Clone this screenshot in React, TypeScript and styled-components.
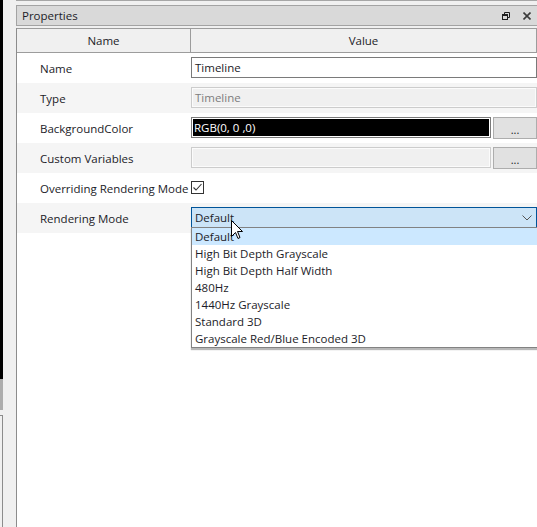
import React from "react";
import styled, { createGlobalStyle } from "styled-components";

const GlobalStyle = createGlobalStyle`
  html, body { margin: 0; padding: 0; background: #f0f0f0; }
  body { font-family: "Open Sans", "Noto Sans", sans-serif; font-size: 11.5px; color: #1c1c28; }
  * { box-sizing: border-box; }
`;

const Screen = styled.div`
  position: relative;
  display: flex;
  width: 537px;
  height: 527px;
  overflow: hidden;
  background: #f0f0f0;
`;

const LeftDock = styled.div`
  width: 16px;
  flex: none;
  display: flex;
  flex-direction: column;
`;

const DockStrip = styled.div<{ $h: number; $bg: string }>`
  width: 3px;
  height: ${(p) => p.$h}px;
  background: ${(p) => p.$bg};
  flex: none;
`;

const DockPanel = styled.div`
  width: 3px;
  flex: 1;
  margin-top: 5px;
  border-top: 1px solid #8c8c8c;
  border-right: 1px solid #8c8c8c;
  background: #f0f0f0;
`;

const Panel = styled.div`
  flex: 1;
  display: flex;
  flex-direction: column;
  min-width: 0;
`;

const TopEdge = styled.div`
  height: 1px;
  background: #a6a6a6;
  margin-bottom: 4px;
  flex: none;
`;

const TitleBar = styled.div`
  height: 21px;
  flex: none;
  display: flex;
  align-items: center;
  justify-content: space-between;
  padding: 0 6px 0 5px;
  background: #d9d9d9;
  border: 1px solid #a3a3a3;
  border-right: none;
`;

const TitleText = styled.span`
  font-size: 11.5px;
  color: #1c1c28;
`;

const TitleIcons = styled.div`
  display: flex;
  align-items: center;
  gap: 13px;
  padding-top: 1px;
`;

const Grid = styled.div`
  position: relative;
  flex: 1;
  margin-top: 2px;
  background: #ffffff;
  border-left: 1px solid #8c8c8c;
`;

const HeaderRow = styled.div`
  display: grid;
  grid-template-columns: 174px 1fr;
  height: 25px;
  background: #f0f0f0;
  border-top: 1px solid #9c9c9c;
  border-bottom: 1px solid #9c9c9c;
  border-right: 1px solid #9c9c9c;
`;

const HeaderCell = styled.div<{ $divider?: boolean }>`
  display: flex;
  align-items: center;
  justify-content: center;
  border-right: ${(p) => (p.$divider ? "1px solid #9c9c9c" : "none")};
  color: #1c1c28;
`;

const PropRow = styled.div<{ $alt?: boolean }>`
  display: grid;
  grid-template-columns: 174px 1fr;
  height: 30px;
  background: ${(p) => (p.$alt ? "#f5f5f5" : "#ffffff")};
`;

const Label = styled.div`
  display: flex;
  align-items: center;
  padding-left: 23px;
  padding-top: 1px;
  white-space: nowrap;
  color: #1c1c28;
`;

const ValueCell = styled.div`
  display: flex;
  align-items: flex-start;
  gap: 2px;
  padding-top: 4px;
  min-width: 0;
`;

const TextBox = styled.div<{ $variant: "normal" | "disabled" | "black" }>`
  flex: 1;
  height: 21px;
  display: flex;
  align-items: center;
  padding-left: 3px;
  white-space: nowrap;
  overflow: hidden;
  ${(p) =>
    p.$variant === "normal"
      ? `background:#fff;border:1px solid #7a7a7a;color:#1c1c28;`
      : p.$variant === "disabled"
      ? `background:#f0f0f0;border:1px solid #cccccc;box-shadow: inset 0 0 0 1px #fbfbfb;color:#7d7d7d;`
      : `background:#000;border:1px solid #7a7a7a;box-shadow: inset 0 0 0 1px #ffffff;color:#ffffff;padding-left:2px;`}
`;

const EllipsisButton = styled.div`
  width: 44px;
  height: 22px;
  flex: none;
  display: flex;
  align-items: flex-end;
  justify-content: center;
  padding-bottom: 4px;
  background: #e1e1e1;
  border: 1px solid #adadad;
  font-size: 11px;
  line-height: 8px;
  color: #1c1c28;
`;

const CheckBox = styled.div`
  width: 13px;
  height: 13px;
  margin-top: 4px;
  background: #fff;
  border: 1px solid #333333;
  display: flex;
  align-items: center;
  justify-content: center;
`;

const SelectBox = styled.div`
  flex: 1;
  height: 21px;
  display: flex;
  align-items: center;
  justify-content: space-between;
  padding: 0 4px 0 3px;
  background: #cce4f7;
  border: 1px solid #005499;
  color: #1c1c28;
`;

const DropList = styled.div`
  position: absolute;
  left: 174px;
  right: 0;
  top: 199px;
  background: #ffffff;
  border: 1px solid #828282;
  border-right: none;
  box-shadow: 0 2px 1px rgba(0, 0, 0, 0.28);
`;

const DropItem = styled.div<{ $active?: boolean }>`
  height: 17px;
  display: flex;
  align-items: center;
  padding-left: 3px;
  white-space: nowrap;
  background: ${(p) => (p.$active ? "#cce8ff" : "transparent")};
  color: #1c1c28;
`;

const Cursor = styled.svg`
  position: absolute;
  left: 231px;
  top: 220px;
  pointer-events: none;
`;

const modes = [
  "Default",
  "High Bit Depth Grayscale",
  "High Bit Depth Half Width",
  "480Hz",
  "1440Hz Grayscale",
  "Standard 3D",
  "Grayscale Red/Blue Encoded 3D",
];

export default function App() {
  return (
    <>
      <GlobalStyle />
      <Screen>
        <LeftDock>
          <DockStrip $h={379} $bg="#000000" />
          <DockStrip $h={31} $bg="#adadad" />
          <DockPanel />
        </LeftDock>
        <Panel>
          <TopEdge />
          <TitleBar>
            <TitleText>Properties</TitleText>
            <TitleIcons>
              <svg width="8" height="8" viewBox="0 0 8 8">
                <rect x="0.5" y="2.5" width="5" height="5" fill="none" stroke="#1e1e1e" />
                <path d="M2.5 2.5V0.5H7.5V5.5H5.5" fill="none" stroke="#1e1e1e" />
                <path d="M0.5 3.5H5.5" stroke="#1e1e1e" />
              </svg>
              <svg width="8" height="8" viewBox="0 0 8 8">
                <path d="M0.5 0.5L7.5 7.5M7.5 0.5L0.5 7.5" stroke="#3a3a3a" strokeWidth="1.6" />
              </svg>
            </TitleIcons>
          </TitleBar>
          <Grid>
            <HeaderRow>
              <HeaderCell $divider>Name</HeaderCell>
              <HeaderCell>Value</HeaderCell>
            </HeaderRow>
            <PropRow>
              <Label>Name</Label>
              <ValueCell>
                <TextBox $variant="normal">Timeline</TextBox>
              </ValueCell>
            </PropRow>
            <PropRow $alt>
              <Label>Type</Label>
              <ValueCell>
                <TextBox $variant="disabled">Timeline</TextBox>
              </ValueCell>
            </PropRow>
            <PropRow>
              <Label>BackgroundColor</Label>
              <ValueCell>
                <TextBox $variant="black">RGB(0, 0 ,0)</TextBox>
                <EllipsisButton>...</EllipsisButton>
              </ValueCell>
            </PropRow>
            <PropRow $alt>
              <Label>Custom Variables</Label>
              <ValueCell>
                <TextBox $variant="disabled" />
                <EllipsisButton>...</EllipsisButton>
              </ValueCell>
            </PropRow>
            <PropRow>
              <Label>Overriding Rendering Mode</Label>
              <ValueCell>
                <CheckBox>
                  <svg width="11" height="11" viewBox="0 0 11 11">
                    <path d="M1.5 5.5L4 8L9.5 2" fill="none" stroke="#333" strokeWidth="1.1" />
                  </svg>
                </CheckBox>
              </ValueCell>
            </PropRow>
            <PropRow $alt>
              <Label>Rendering Mode</Label>
              <ValueCell>
                <SelectBox>
                  <span>Default</span>
                  <svg width="10" height="6" viewBox="0 0 10 6">
                    <path d="M0.5 0.5L5 5L9.5 0.5" fill="none" stroke="#555" strokeWidth="1" />
                  </svg>
                </SelectBox>
              </ValueCell>
            </PropRow>
            <DropList>
              {modes.map((m, i) => (
                <DropItem key={m} $active={i === 0}>
                  {m}
                </DropItem>
              ))}
            </DropList>
          </Grid>
        </Panel>
        <Cursor width="12" height="19" viewBox="0 0 12 19">
          <path
            d="M0.5 0.5V16.5L4.5 12.5L7 18.5L9 17.5L6.5 11.5H11.5Z"
            fill="#ffffff"
            stroke="#000000"
            strokeWidth="1"
            strokeLinejoin="miter"
          />
        </Cursor>
      </Screen>
    </>
  );
}
